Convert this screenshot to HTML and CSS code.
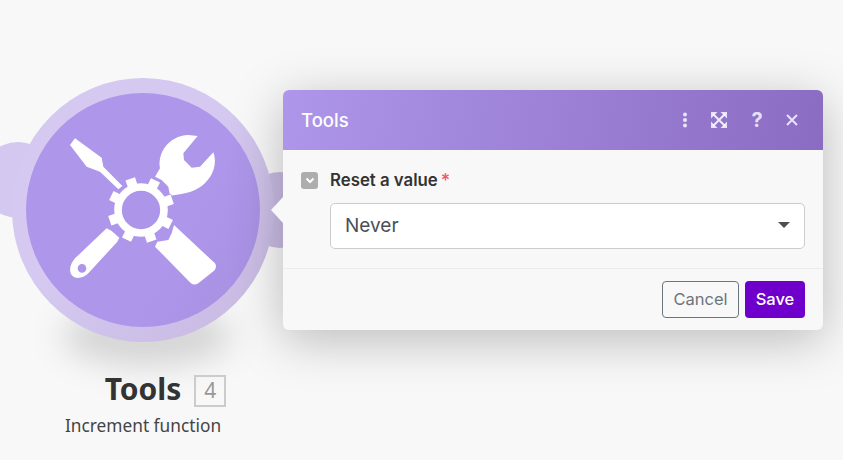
FILE: index.html
```html
<!DOCTYPE html>
<html lang="en">
<head>
<meta charset="utf-8">
<title>Tools</title>
<link rel="stylesheet" href="styles.css">
</head>
<body>
<main class="canvas">
  <div class="module">
    <div class="ground-shadow"></div>
    <div class="bump bump-left"></div>
    <div class="bump bump-right"></div>
    <div class="ring"></div>
    <div class="disc">
      <svg class="tools-icon" viewBox="0 0 495 495" width="165" height="165">
        <path class="w" d="M45 40 L30 60 L80 125 L100 133 L120 140 L175 193 L187 183 L130 125 L125 98 Z"/>
        <path class="w" d="M285 155 L300 130 C292 85 325 32 385 30 L413 33 L370 85 L372 105 L395 128 L420 125 L460 82 C476 125 450 175 405 195 C385 205 365 207 345 210 L330 212 L325 185 L305 165 Z"/>
        <path class="w" fill-rule="evenodd" d="M140 310 L155 318 L178 338 L172 350 L85 445 C70 460 45 465 35 450 C25 435 32 415 45 400 Z M66 430 m-13 0 a13 13 0 1 0 26 0 a13 13 0 1 0 -26 0 Z"/>
        <path class="w" d="M342 300 L465 415 Q472 427 462 437 L415 475 Q402 483 392 474 L285 365 L292 350 L325 345 L335 325 Z"/>
        <circle class="gap" cx="243" cy="255" r="84"/>
        <g class="teeth">
          <rect x="228" y="156" width="30" height="30" transform="rotate(-19 243 255)"/>
          <rect x="228" y="156" width="30" height="30" transform="rotate(26 243 255)"/>
          <rect x="228" y="156" width="30" height="30" transform="rotate(71 243 255)"/>
          <rect x="228" y="156" width="30" height="30" transform="rotate(116 243 255)"/>
          <rect x="228" y="156" width="30" height="30" transform="rotate(161 243 255)"/>
          <rect x="228" y="156" width="30" height="30" transform="rotate(206 243 255)"/>
          <rect x="228" y="156" width="30" height="30" transform="rotate(251 243 255)"/>
          <rect x="228" y="156" width="30" height="30" transform="rotate(296 243 255)"/>
        </g>
        <circle class="gear-ring" cx="243" cy="255" r="69"/>
      </svg>
    </div>
    <div class="caption">
      <div class="title-row">
        <span class="title">Tools</span>
        <span class="badge">4</span>
      </div>
      <div class="subtitle">Increment function</div>
    </div>
  </div>

  <section class="dialog">
    <span class="notch"></span>
    <header class="dialog-head">
      <h1 class="dialog-title">Tools</h1>
      <div class="head-icons">
        <svg class="hicon" viewBox="0 0 18 18" width="18" height="18"><circle cx="9" cy="3.5" r="2"/><circle cx="9" cy="9" r="2"/><circle cx="9" cy="14.5" r="2"/></svg>
        <svg class="hicon expand" viewBox="0 0 18 18" width="18" height="18"><path class="corners" d="M1 1h6.5L1 7.5zM17 1v6.5L10.500 1zM1 17v-6.500L7.500 17zM17 17h-6.500L17 10.500z"/><path class="cross" d="M3 3l12 12M15 3L3 15"/></svg>
        <span class="help">?</span>
        <svg class="hicon close" viewBox="0 0 14 14" width="14" height="14"><path d="M2 2l10 10M12 2L2 12"/></svg>
      </div>
    </header>
    <div class="dialog-body">
      <div class="field-label">
        <span class="collapse"><svg viewBox="0 0 16 16" width="16" height="16"><path d="M4.500 6.500 8 10l3.500-3.500"/></svg></span>
        <span class="label-text">Reset a value</span><span class="req">*</span>
      </div>
      <div class="select">
        <span>Never</span>
        <span class="caret"></span>
      </div>
    </div>
    <footer class="dialog-foot">
      <button class="btn btn-cancel" type="button">Cancel</button>
      <button class="btn btn-save" type="button">Save</button>
    </footer>
  </section>
</main>
</body>
</html>
```

FILE: styles.css
```css
* { box-sizing: border-box; }
html, body { margin: 0; height: 100%; }
body { background: #f8f8f8; overflow: hidden; font-family: Inter, "Liberation Sans", sans-serif; }
.canvas { position: relative; width: 843px; height: 460px; overflow: hidden; }

.module { position: absolute; left: 12px; top: 78px; width: 262px; height: 264px; }
.ground-shadow {
  position: absolute; left: 50px; top: 228px; width: 170px; height: 60px; border-radius: 50%;
  background: rgba(0,0,0,.14); filter: blur(16px);
}
.bump { position: absolute; width: 76px; height: 76px; border-radius: 50%; background: #d4c8f0; }
.bump-left { left: -32px; top: 64px; }
.bump-right { left: 230px; top: 94px; background: #c9bbe3; }
.ring { position: absolute; inset: 0; border-radius: 50%; background: linear-gradient(135deg, #d5c9f1 45%, #cabce4 85%); }
.disc {
  position: absolute; left: 14px; top: 15px; width: 234px; height: 234px; border-radius: 50%;
  background: linear-gradient(120deg, #ae97ea 65%, #a68fe0 100%);
}
.tools-icon { position: absolute; left: 34px; top: 32px; }
.w { fill: #fff; }
.gap { fill: #ae97ea; }
.teeth rect { fill: #fff; stroke: #ae97ea; stroke-width: 4; paint-order: stroke; }
.gear-ring { fill: #ad96e9; stroke: #fff; stroke-width: 23; }

.caption { position: absolute; left: 0; top: 292px; width: 262px; text-align: center; font-family: "Noto Sans", "Open Sans", sans-serif; }
.title-row { position: relative; display: inline-block; height: 38px; }
.title { font-size: 30px; line-height: 38px; font-weight: 700; color: #333; }
.badge {
  position: absolute; left: calc(100% + 13px); top: 5px; width: 32px; height: 32px;
  border: 2px solid #ccc; color: #999; font-size: 21px; line-height: 27px; text-align: center; font-weight: 400;
}
.subtitle { font-size: 17.300px; line-height: 24px; color: #444; margin-top: 6px; }

.dialog {
  position: absolute; left: 283px; top: 90px; width: 540px; height: 240px; border-radius: 6px;
  background: #f8f8f8; box-shadow: 0 10px 50px rgba(0,0,0,.25);
  display: flex; flex-direction: column;
}
.notch {
  position: absolute; left: -12px; top: 107px; width: 0; height: 0;
  border-style: solid; border-width: 13px 12px 13px 0; border-color: transparent #f8f8f8 transparent transparent;
}
.dialog-head {
  height: 60px; padding: 0 24px 0 18px; display: flex; align-items: center; justify-content: space-between;
  border-radius: 6px 6px 0 0; background: linear-gradient(100deg, #ae96ea 0%, #8a6cc3 100%); color: #fff;
}
.dialog-title { margin: 0; font-size: 18.500px; font-weight: 500; line-height: 62px; }
.head-icons { display: flex; align-items: center; gap: 16px; color: rgba(255,255,255,.8); }
.hicon { fill: rgba(255,255,255,.8); }
.hicon.expand .cross { fill: none; stroke: rgba(255,255,255,.85); stroke-width: 2; }
.hicon.close { fill: none; stroke: rgba(255,255,255,.8); stroke-width: 2; margin-left: 2px; }
.help { font-size: 20px; font-weight: 700; width: 20px; text-align: center; margin-left: 3px; line-height: 20px; }
.dialog-body { flex: 1; padding: 21px 18px 0; border-bottom: 1px solid #ececec; }
.field-label { display: flex; align-items: center; height: 18px; font-size: 16.800px; font-weight: 600; color: #333; }
.collapse { width: 17px; height: 17px; border-radius: 3px; background: #adadad; margin-right: 12px; display: flex; align-items: center; justify-content: center; }
.collapse svg { fill: none; stroke: #fff; stroke-width: 2; }
.req { color: #f4536e; margin-left: 3px; font-weight: 500; font-size: 18px; }
.select {
  margin: 14px 0 0 29px; height: 46px; border: 1px solid #ccc; border-radius: 5px; background: #fff;
  display: flex; align-items: center; justify-content: space-between; padding: 0 14px 2px;
  font-size: 19px; color: #4a5059;
}
.caret { width: 0; height: 0; border-style: solid; border-width: 6px 6.500px 0; border-color: #4a4f57 transparent transparent; }
.dialog-foot { height: 61px; flex: none; padding: 0 18px 1px 0; display: flex; align-items: center; justify-content: flex-end; gap: 6px; }
.btn { height: 37px; border-radius: 4px; font-family: inherit; font-size: 16.500px; font-weight: 500; padding: 0; }
.btn-cancel { width: 77px; border: 1px solid #6c757d; background: #f8f8f8; color: #6c757d; font-weight: 400; }
.btn-save { width: 60px; border: 0; background: #6f00cc; color: #fff; }
```
